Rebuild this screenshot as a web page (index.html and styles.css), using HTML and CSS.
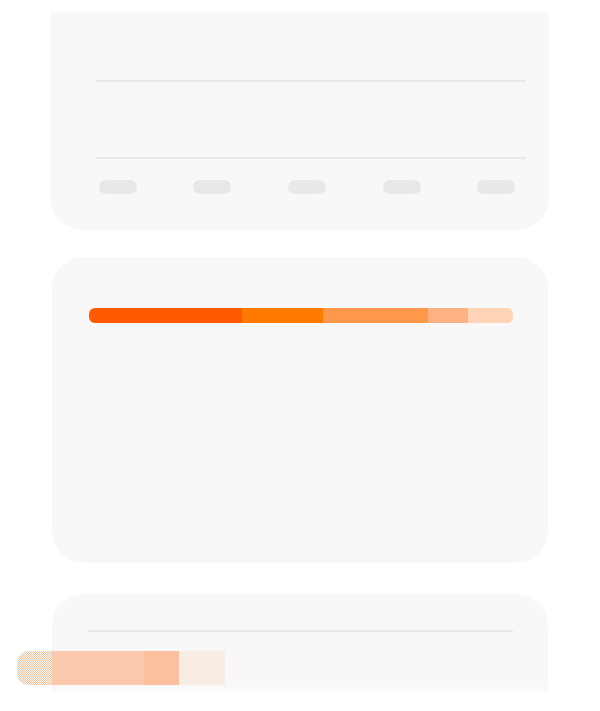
FILE: index.html
```html
<!DOCTYPE html>
<html>
<head>
<meta charset="utf-8">
<link rel="stylesheet" href="styles.css">
</head>
<body>
<main class="page">
  <section class="card card-chart">
    <div class="grid-line first"></div>
    <div class="grid-line second"></div>
    <div class="labels">
      <span class="pill"></span>
      <span class="pill"></span>
      <span class="pill"></span>
      <span class="pill"></span>
      <span class="pill"></span>
    </div>
  </section>

  <section class="card card-bar">
    <div class="stack">
      <span class="seg s1" style="width:152.7px"></span>
      <span class="seg s2" style="width:81px"></span>
      <span class="seg s3" style="width:104.7px"></span>
      <span class="seg s4" style="width:40px"></span>
      <span class="seg s5" style="width:45.6px"></span>
    </div>
  </section>

  <section class="card card-bottom">
    <div class="grid-line third"></div>
    <div class="ghost-bar">
      <span class="gseg g0" style="width:35px">
        <svg class="dither" width="35" height="34" viewBox="0 0 35 34" shape-rendering="crispEdges">
          <defs>
            <pattern id="chk" width="2" height="2" patternUnits="userSpaceOnUse">
              <rect x="0" y="0" width="2" height="2" fill="#ffffff"/>
              <rect x="0" y="0" width="1" height="1" fill="#fbbd98"/>
              <rect x="1" y="1" width="1" height="1" fill="#fbbd98"/>
            </pattern>
          </defs>
          <rect x="0" y="0" width="35" height="34" fill="url(#chk)"/>
        </svg>
      </span>
      <span class="gseg g1" style="width:92.3px"></span>
      <span class="gseg g2" style="width:35px"></span>
      <span class="gseg g3" style="width:45px"></span>
    </div>
  </section>
</main>
</body>
</html>
```

FILE: styles.css
```css
html, body {
  margin: 0;
  padding: 0;
  background: #ffffff;
  font-family: "Liberation Sans", Arial, sans-serif;
}

.page {
  display: flex;
  flex-direction: column;
  padding-top: 12px;
  height: 711px;
  box-sizing: border-box;
  overflow: hidden;
}

.card {
  background: #f8f8f8;
  box-sizing: border-box;
}

.card-chart {
  margin-left: 49.5px;
  width: 499.5px;
  height: 218px;
  border-radius: 0 0 32px 32px;
  padding: 68px 23px 0 46.5px;
}

.grid-line {
  height: 2px;
  background: #e8e8e8;
}

.grid-line.second {
  margin-top: 75px;
}

.labels {
  display: flex;
  justify-content: space-between;
  margin-top: 21px;
  padding: 0 10.7px 0 2.7px;
}

.pill {
  width: 38px;
  height: 14px;
  border-radius: 7px;
  background: #e8e8e8;
}

.card-bar {
  margin-top: 27px;
  margin-left: 52px;
  width: 496px;
  height: 306px;
  border-radius: 32px;
  padding: 50.5px 34.7px 0 37.3px;
}

.stack {
  display: flex;
  height: 15px;
  border-radius: 6px;
  overflow: hidden;
}

.seg { height: 100%; }
.s1 { background: #ff5a00; }
.s2 { background: #ff7a00; }
.s3 { background: #ff984a; }
.s4 { background: #ffb281; }
.s5 { background: #ffd3b5; }

.card-bottom {
  margin-top: 31px;
  margin-left: 52px;
  width: 496px;
  height: 98px;
  border-radius: 32px 32px 0 0;
  padding: 36px 35px 0 36.3px;
  background: linear-gradient(#f8f8f8 0, #f8f8f8 92%, #fbfbfb 100%);
}

.grid-line.third {
  height: 2px;
}

.ghost-bar {
  display: flex;
  height: 34px;
  margin-top: 19px;
  margin-left: -71.3px;
}

.gseg { height: 100%; flex: none; }

.g0 {
  border-radius: 12px 0 0 12px;
  overflow: hidden;
  background: #ffffff;
}

.dither { display: block; }

.g1 { background: #fac8ad; }
.g2 { background: #fbc19f; margin-right: 1px; }
.g3 { background: #f9ece3; }
```
